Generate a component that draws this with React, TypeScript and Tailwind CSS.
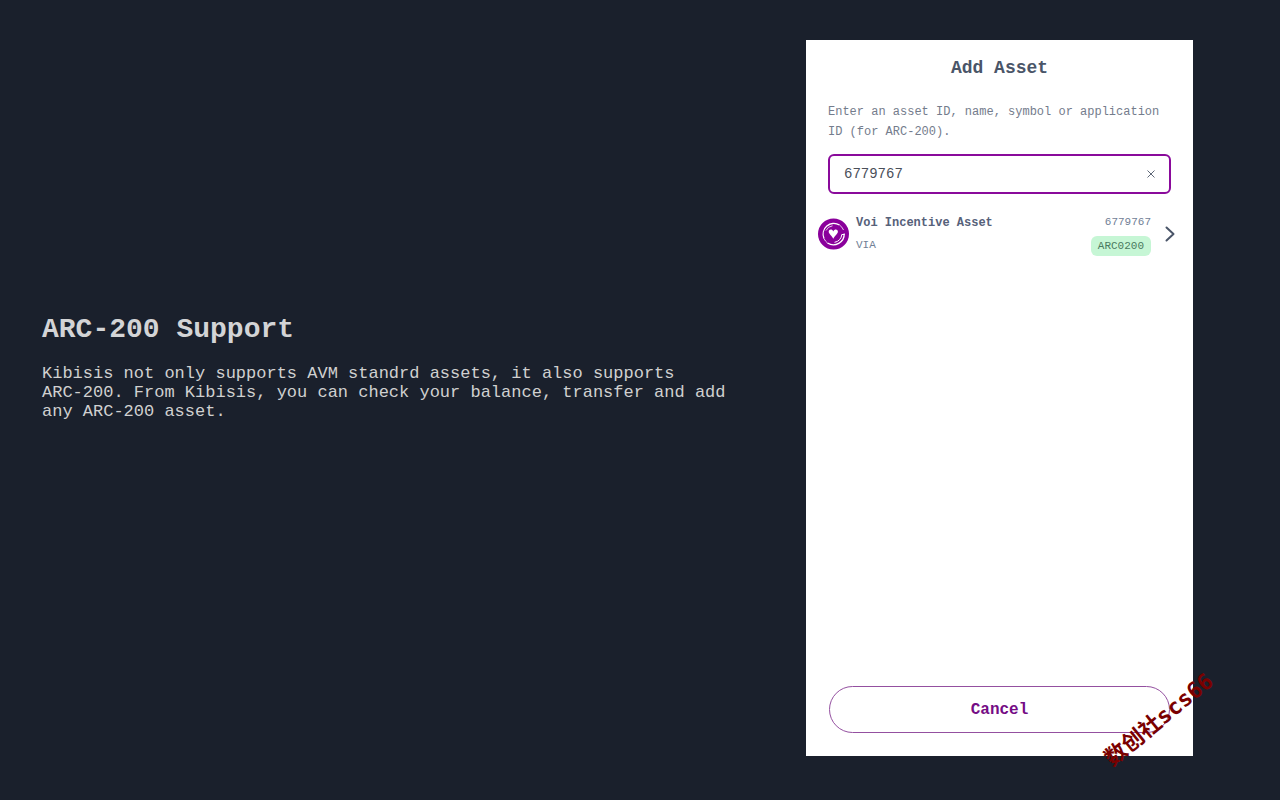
import { useState } from "react";

function AssetLogo() {
  return (
    <svg viewBox="0 0 32 32" className="h-8 w-8 shrink-0" aria-hidden="true">
      <circle cx="15.5" cy="16" r="15.5" fill="#8a009b" />
      <g fill="none" stroke="#fff">
        <path d="M6 20.5A10.8 10.8 0 0 1 21.5 7" strokeWidth="1.3" />
        <path d="M25.5 12A10.8 10.8 0 0 0 21.5 7" strokeWidth="0.8" />
        <path d="M26.2 15.5A10.8 10.8 0 0 1 9.5 25" strokeWidth="1.3" />
        <path d="M9.5 25A10.8 10.8 0 0 1 6 20.5" strokeWidth="0.8" />
        <path d="M8 12.5A8.4 8.4 0 0 1 14.5 7.8" strokeWidth="0.8" />
        <path d="M26.5 16.5h-2.7A8.4 8.4 0 0 1 16.5 24.3" strokeWidth="1" />
      </g>
      <path
        d="M15.3 20.8C14 18 10.7 16 10.7 13.6c0-2.7 3.5-3.1 4.6-.2 1.1-2.9 4.6-2.5 4.6.2 0 2.4-3.3 4.4-4.6 7.2z"
        fill="#fff"
      />
    </svg>
  );
}

function AssetRow() {
  return (
    <button type="button" className="flex w-full items-center px-3 text-left">
      <AssetLogo />
      <span className="ml-1.5 flex flex-1 flex-col gap-0.5">
        <span className="text-[12px] leading-5 font-bold text-[#56617a]">
          Voi Incentive Asset
        </span>
        <span className="text-[11px] leading-5 text-[#718096]">VIA</span>
      </span>
      <span className="flex flex-col items-end gap-1">
        <span className="text-[11px] leading-5 text-[#718096]">6779767</span>
        <span className="rounded-md bg-[#c6f6d5] px-[7px] text-[11px] leading-5 text-[#4a7a60]">
          ARC0200
        </span>
      </span>
      <svg
        viewBox="0 0 10 16"
        className="mr-1.5 ml-3.5 h-4 w-2.5"
        fill="none"
        stroke="#4a5568"
        strokeWidth="2"
        strokeLinecap="round"
        strokeLinejoin="round"
        aria-hidden="true"
      >
        <path d="M1.5 1.5 8.5 8l-7 6.5" />
      </svg>
    </button>
  );
}

function AddAssetPanel() {
  const [query, setQuery] = useState("6779767");

  return (
    <section className="relative flex w-full max-w-[387px] shrink-0 flex-col bg-white pt-3 pb-[23px]">
      <h2 className="text-center text-[18px] leading-8 font-bold text-[#4a5568]">
        Add Asset
      </h2>

      <div className="mt-[18px] px-[22px]">
        <label
          htmlFor="asset-search"
          className="block text-[12px] leading-5 text-[#747c8c]"
        >
          Enter an asset ID, name, symbol or application ID (for ARC-200).
        </label>
        <div className="mt-3 flex h-10 items-center rounded-md border-2 border-[#8a0a9b] px-3.5">
          <input
            id="asset-search"
            type="text"
            value={query}
            onChange={(e) => setQuery(e.target.value)}
            className="min-w-0 flex-1 bg-transparent text-[14px] leading-5 text-[#4a4f5a] outline-none"
          />
          <button type="button" aria-label="Clear" onClick={() => setQuery("")}>
            <svg viewBox="0 0 8 8" className="h-2 w-2" stroke="#5f6878" aria-hidden="true">
              <path d="M.5.5l7 7M7.5.5l-7 7" />
            </svg>
          </button>
        </div>
      </div>

      <div className="mt-[18px] flex-1">
        <AssetRow />
      </div>

      <div className="px-[23px]">
        <button
          type="button"
          className="h-[47px] w-full rounded-full border border-[#9450a0] text-[16px] font-bold text-[#750c85]"
        >
          Cancel
        </button>
      </div>

      <span className="pointer-events-none absolute -right-8 bottom-6 -rotate-39 font-['DejaVu_Sans_Mono','Noto_Sans_CJK_SC',monospace] text-[22px] leading-6 font-bold whitespace-nowrap text-[#7a0000]">
        数创社scs66
      </span>
    </section>
  );
}

export default function App() {
  return (
    <main className="flex min-h-screen flex-col gap-16 overflow-x-hidden bg-[#1a202c] px-[42px] pt-10 pb-11 font-['Liberation_Mono','Noto_Sans_CJK_SC',monospace] lg:flex-row lg:pr-[87px]">
      <div className="min-w-0 flex-1 self-center lg:pb-16">
        <h1 className="text-[28px] leading-9 font-bold text-[#d3d4d6]">
          ARC-200 Support
        </h1>
        <p className="mt-4 text-[17px] leading-[19px] text-[#d0d0d0]">
          Kibisis not only supports AVM standrd assets, it also supports{" "}
          <br className="hidden lg:inline" />
          ARC-200. From Kibisis, you can check your balance, transfer and add
          any ARC-200 asset.
        </p>
      </div>
      <AddAssetPanel />
    </main>
  );
}
